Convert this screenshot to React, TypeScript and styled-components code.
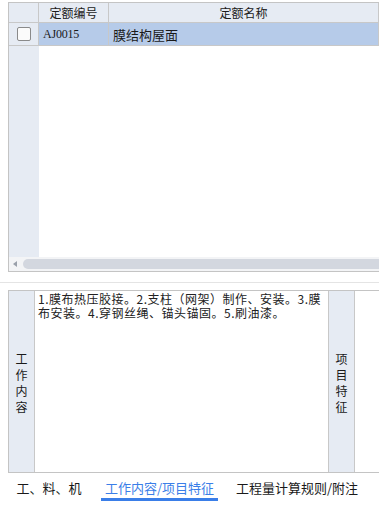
import React from "react";
import styled, { createGlobalStyle } from "styled-components";

const GlobalStyle = createGlobalStyle`
  html, body {
    margin: 0;
    padding: 0;
    background: #ffffff;
    overflow: hidden;
  }
  body {
    font-family: "Noto Sans CJK SC", "Noto Sans", sans-serif;
    color: #1a1a1a;
  }
`;

const Page = styled.div`
  width: 379px;
  height: 511px;
  display: flex;
  flex-direction: column;
  overflow: hidden;
`;

/* quota grid */
const GridFrame = styled.div`
  margin: 2px 0 0 8px;
  height: 270px;
  border: 1px solid #c4c4c4;
  border-right: none;
  display: flex;
  flex-direction: column;
  box-sizing: border-box;
`;

const Row = styled.div<{ $selected?: boolean; $header?: boolean }>`
  display: grid;
  grid-template-columns: 30px 70px 1fr;
  height: ${(p) => (p.$header ? "20px" : "23px")};
  background: ${(p) => (p.$header ? "#e6ebf3" : p.$selected ? "#b6cbe9" : "#fff")};
  border-bottom: 1px solid #c8c8c8;
  box-sizing: border-box;
`;

const Cell = styled.div<{ $center?: boolean; $gutter?: boolean }>`
  display: flex;
  align-items: center;
  justify-content: ${(p) => (p.$center ? "center" : "flex-start")};
  padding-left: ${(p) => (p.$center ? "0" : "4px")};
  border-right: 1px solid #c8c8c8;
  font-size: 12px;
  background: ${(p) => (p.$gutter ? "#e6ebf3" : "transparent")};
  white-space: nowrap;
  overflow: hidden;
`;

const CodeText = styled.span`
  font-family: "Liberation Serif", serif;
  font-size: 12px;
  letter-spacing: -0.2px;
`;

const NameText = styled.span`
  font-size: 13px;
`;

const CheckBox = styled.span`
  width: 12px;
  height: 12px;
  border: 1px solid #8a8a8a;
  border-radius: 2px;
  background: #fbfbfb;
`;

const GridBody = styled.div`
  flex: 1;
  display: grid;
  grid-template-columns: 30px 1fr;
`;

const Gutter = styled.div`
  background: #e6ebf3;
`;

const HScroll = styled.div`
  height: 14px;
  display: flex;
  align-items: center;
  gap: 6px;
  padding-left: 4px;
  background: #f3f4f6;
`;

const ScrollThumb = styled.div`
  flex: 1;
  height: 10px;
  border-radius: 5px 0 0 5px;
  background: #d3d7df;
`;

const Divider = styled.div`
  margin-top: 10px;
  height: 1px;
  background: #e4e4e4;
`;

/* work content panel */
const Panel = styled.div`
  margin: 7px 0 0 8px;
  height: 183px;
  border: 1px solid #c4c4c4;
  border-right: none;
  display: grid;
  grid-template-columns: 26px 294px 26px 1fr;
  box-sizing: border-box;
`;

const SideLabel = styled.div`
  background: #e6ebf3;
  border-right: 1px solid #c8c8c8;
  display: flex;
  flex-direction: column;
  align-items: center;
  justify-content: center;
  font-size: 12px;
  line-height: 16px;
  padding-top: 2px;
`;

const ContentText = styled.div`
  border-right: 1px solid #c8c8c8;
  padding: 1px 3px;
  font-size: 12px;
  line-height: 14px;
  letter-spacing: 0.5px;
  color: #222;
`;

const Blank = styled.div``;

/* tabs */
const Tabs = styled.div`
  display: flex;
  align-items: flex-start;
  padding-left: 20px;
  margin-top: 6px;
`;

const Tab = styled.div<{ $active?: boolean; $width: number; $gap: number }>`
  width: ${(p) => p.$width}px;
  margin-left: ${(p) => p.$gap}px;
  display: flex;
  justify-content: center;
  font-size: 13px;
  line-height: 18px;
  padding-bottom: 1px;
  color: ${(p) => (p.$active ? "#3a7ee8" : "#1a1a1a")};
  border-bottom: 3px solid ${(p) => (p.$active ? "#3a7ee8" : "transparent")};
  white-space: nowrap;
`;

const App = (): JSX.Element => {
  return (
    <Page>
      <GlobalStyle />
      <GridFrame>
        <Row $header>
          <Cell $center />
          <Cell $center>定额编号</Cell>
          <Cell $center>定额名称</Cell>
        </Row>
        <Row $selected>
          <Cell $center $gutter>
            <CheckBox />
          </Cell>
          <Cell>
            <CodeText>AJ0015</CodeText>
          </Cell>
          <Cell>
            <NameText>膜结构屋面</NameText>
          </Cell>
        </Row>
        <GridBody>
          <Gutter />
          <Blank />
        </GridBody>
        <HScroll>
          <svg width="4" height="6" viewBox="0 0 4 6">
            <path d="M4 0 L0 3 L4 6 Z" fill="#9aa0aa" />
          </svg>
          <ScrollThumb />
        </HScroll>
      </GridFrame>
      <Divider />
      <Panel>
        <SideLabel>
          <span>工</span>
          <span>作</span>
          <span>内</span>
          <span>容</span>
        </SideLabel>
        <ContentText>
          1.膜布热压胶接。2.支柱（网架）制作、安装。3.膜布安装。4.穿钢丝绳、锚头锚固。5.刷油漆。
        </ContentText>
        <SideLabel>
          <span>项</span>
          <span>目</span>
          <span>特</span>
          <span>征</span>
        </SideLabel>
        <Blank />
      </Panel>
      <Tabs>
        <Tab $width={58} $gap={0}>工、料、机</Tab>
        <Tab $width={117} $gap={23} $active>
          工作内容/项目特征
        </Tab>
        <Tab $width={134} $gap={12}>
          工程量计算规则/附注
        </Tab>
      </Tabs>
    </Page>
  );
};

export default App;
